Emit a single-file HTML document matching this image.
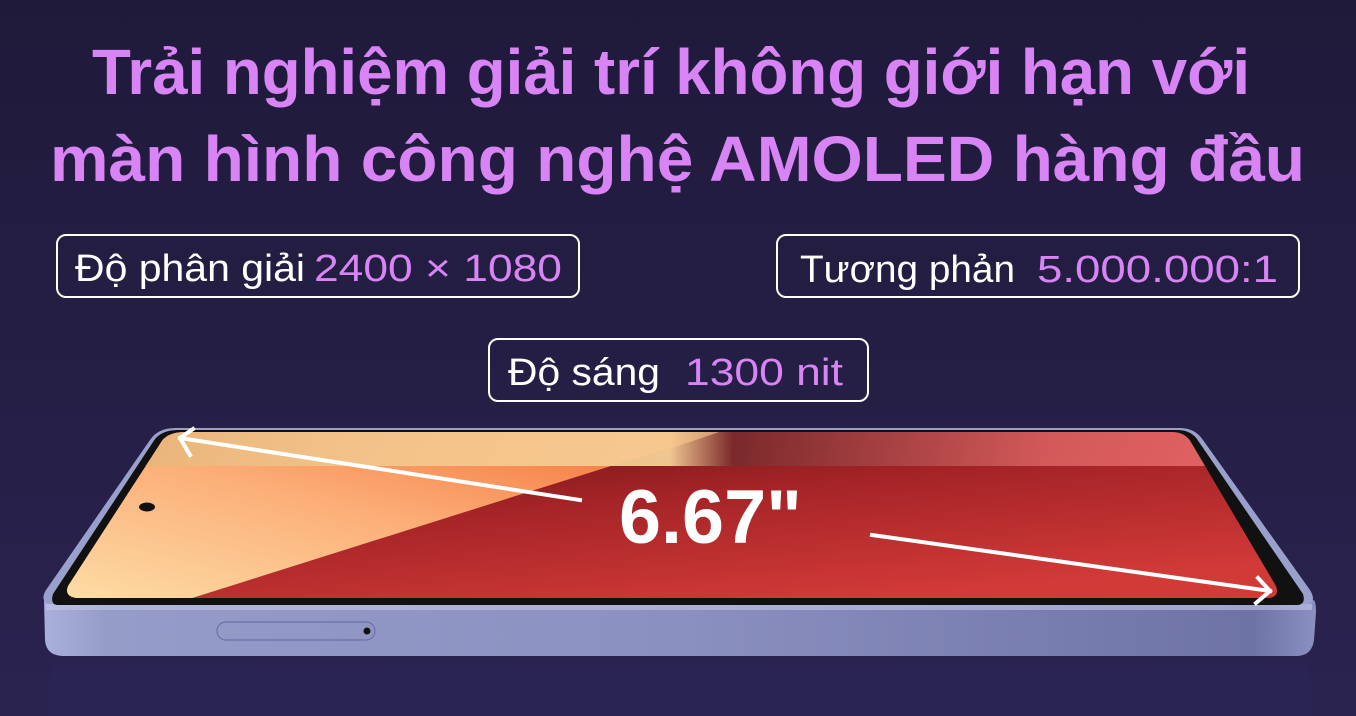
<!DOCTYPE html>
<html><head><meta charset="utf-8"><style>
html,body{margin:0;padding:0;width:1356px;height:716px;overflow:hidden;background:#221d40;}
svg{display:block}
</style></head><body>
<svg width="1356" height="716" viewBox="0 0 1356 716" xmlns="http://www.w3.org/2000/svg">
<defs>
<linearGradient id="bg" x1="0" y1="0" x2="0" y2="1">
<stop offset="0" stop-color="#1f1a3a"/><stop offset="1" stop-color="#2a2350"/>
</linearGradient>
<linearGradient id="frame" x1="0" y1="0" x2="1" y2="0">
<stop offset="0" stop-color="#aab0dc"/><stop offset="0.05" stop-color="#959cc8"/><stop offset="0.5" stop-color="#8a90c0"/><stop offset="0.95" stop-color="#6e73a6"/><stop offset="1" stop-color="#8a90c2"/>
</linearGradient>
<linearGradient id="peach" x1="0" y1="1" x2="1" y2="0">
<stop offset="0" stop-color="#fde0a8"/><stop offset="0.5" stop-color="#fcae78"/><stop offset="1" stop-color="#f26a30"/>
</linearGradient>
<linearGradient id="red" x1="0" y1="0" x2="0.6" y2="1">
<stop offset="0" stop-color="#5a0f12"/><stop offset="0.5" stop-color="#a52427"/><stop offset="1" stop-color="#d23a38"/>
</linearGradient>
<linearGradient id="band" x1="0" y1="0" x2="1" y2="0">
<stop offset="0" stop-color="#c98a4a"/><stop offset="0.25" stop-color="#f0c289"/><stop offset="0.5" stop-color="#f8d49a"/><stop offset="0.55" stop-color="#7a2a2c"/><stop offset="0.8" stop-color="#d85e5e"/><stop offset="1" stop-color="#ec6b6b"/>
</linearGradient>
</defs>
<rect width="1356" height="716" fill="url(#bg)"/>
<g font-family="Liberation Sans, sans-serif" font-weight="bold" fill="#d884f5">
<text x="92" y="94" font-size="64" textLength="1158" lengthAdjust="spacingAndGlyphs">Trải nghiệm giải trí không giới hạn với</text>
<text x="50" y="181" font-size="64" textLength="1255" lengthAdjust="spacingAndGlyphs">màn hình công nghệ AMOLED hàng đầu</text>
</g>
<g fill="none" stroke="#fff" stroke-width="2">
<rect x="57" y="235" width="522" height="62" rx="9"/>
<rect x="777" y="235" width="522" height="62" rx="9"/>
<rect x="489" y="339" width="379" height="62" rx="9"/>
</g>
<g font-family="Liberation Sans, sans-serif" font-size="38">
<text x="75" y="281" fill="#fff" textLength="230" lengthAdjust="spacingAndGlyphs">Độ phân giải</text>
<text x="314" y="281" fill="#d884f5" textLength="248" lengthAdjust="spacingAndGlyphs">2400 × 1080</text>
<text x="800" y="282" fill="#fff" textLength="215" lengthAdjust="spacingAndGlyphs">Tương phản</text>
<text x="1037" y="282" fill="#d884f5" textLength="241" lengthAdjust="spacingAndGlyphs">5.000.000:1</text>
<text x="508" y="385" fill="#fff" textLength="152" lengthAdjust="spacingAndGlyphs">Độ sáng</text>
<text x="685" y="385" fill="#d884f5" textLength="158" lengthAdjust="spacingAndGlyphs">1300 nit</text>
</g>
<rect x="50" y="660" width="1260" height="56" fill="#2a2452" opacity="0.8"/>
<path d="M44 600 L1313 600 Q1316 600 1316 612 L1314 640 Q1312 655 1298 656 L62 656 Q46 655 45 640 Z" fill="url(#frame)"/>
<path d="M46 604 L1312 604 L1312 610 L46 610 Z" fill="#c2c6ea" opacity="0.6"/>
<path d="M175 428 L1180 428 Q1195 428 1203 440 L1310 590 Q1316 600 1310 604 L48 604 Q40 600 46 590 L150 440 Q158 428 175 428 Z" fill="#9aa0cc"/>
<path d="M178 430 L1178 430 Q1192 430 1199 442 L1303 594 Q1306 604 1298 605 L57 605 Q50 604 53 594 L153 442 Q160 430 178 430 Z" fill="#111"/>
<clipPath id="sc"><path d="M185 432 L1172 432 Q1186 432 1192 444 L1276 586 Q1280 597 1268 598 L76 598 Q64 596 68 586 L160 444 Q166 432 185 432 Z"/></clipPath>
<g clip-path="url(#sc)">
<rect x="40" y="430" width="1260" height="175" fill="url(#red)"/>
<polygon points="40,605 170,605 725,430 40,430" fill="url(#peach)"/>
<rect x="40" y="430" width="1260" height="36" fill="url(#band)" opacity="0.92"/>
<polygon points="40,430 725,430 620,466 40,466" fill="#f5c58c" opacity="0.6"/>
</g>
<ellipse cx="147" cy="507" rx="8" ry="4.5" fill="#111"/>
<rect x="217" y="622" width="158" height="18" rx="9" fill="none" stroke="#6a70a8" stroke-width="1.2"/>
<circle cx="367" cy="631" r="3.5" fill="#111"/>
<g stroke="#fff" stroke-width="4" fill="none" stroke-linecap="square">
<line x1="580" y1="500" x2="180" y2="438"/>
<polyline points="193,429 180,438 190,455"/>
<line x1="872" y1="535" x2="1270" y2="591"/>
<polyline points="1258,578 1270,591 1256,603"/>
</g>
<text x="619" y="543" font-family="Liberation Sans, sans-serif" font-weight="bold" font-size="76" fill="#fff" textLength="183" lengthAdjust="spacingAndGlyphs">6.67"</text>
</svg>
</body></html>
